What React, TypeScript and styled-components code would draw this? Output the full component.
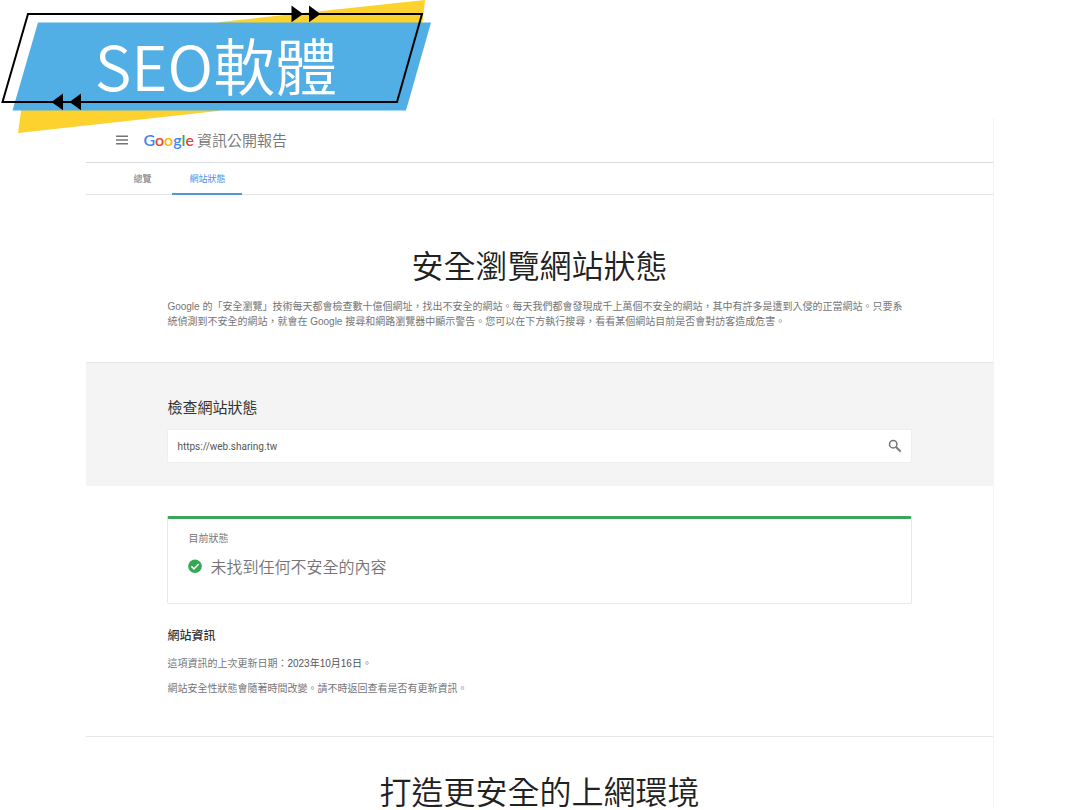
import React from "react";
import styled, { createGlobalStyle } from "styled-components";

const GlobalStyle = createGlobalStyle`
  *, *::before, *::after { box-sizing: border-box; }
  body {
    margin: 0;
    background: #fff;
    color: #757575;
    font-family: "Liberation Sans", "Noto Sans CJK TC", sans-serif;
    font-size: 10px;
    line-height: 15px;
  }
  h1, h2, h3, p { margin: 0; }
`;

const Page = styled.div`
  position: relative;
  padding: 118px 8% 0;
`;

const Banner = styled.div`
  position: absolute;
  top: 0;
  left: 0;
  width: 432px;
  height: 134px;
  display: flex;
  justify-content: center;
`;

const BannerArt = styled.svg`
  position: absolute;
  inset: 0;
`;

const BannerText = styled.span`
  position: relative;
  color: #fff;
  font-family: "Noto Sans CJK TC", sans-serif;
  font-size: 62px;
  font-weight: 350;
  line-height: 128px;
`;

const Report = styled.div`
  border-right: 1px solid #f4f4f4;
`;

const Header = styled.header`
  display: flex;
  align-items: center;
  height: 45px;
  padding-left: 29px;
  border-bottom: 1px solid #dadcde;
`;

const IconButton = styled.button`
  display: flex;
  padding: 0;
  border: 0;
  background: none;
  color: #757575;
  cursor: pointer;
`;

const Brand = styled.a`
  display: flex;
  align-items: center;
  gap: 3px;
  margin-left: 14px;
  color: #757575;
  font-family: "Noto Sans CJK TC", sans-serif;
  font-size: 15px;
  font-weight: 350;
  line-height: 20px;
  text-decoration: none;
`;

const Wordmark = styled.span`
  font-family: Lato, sans-serif;
  font-size: 16px;
  font-weight: 600;
`;

const Letter = styled.span<{ $color: string }>`
  color: ${(p) => p.$color};
`;

const Tabs = styled.nav`
  display: flex;
  gap: 4px;
  height: 32px;
  padding-left: 30px;
  border-bottom: 1px solid #e2e4e6;
`;

const Tab = styled.a<{ $active?: boolean }>`
  height: 32px;
  padding: 0 17px;
  border-bottom: 2px solid ${(p) => (p.$active ? "#5296d8" : "transparent")};
  color: ${(p) => (p.$active ? "#4a90e8" : "#757575")};
  font-size: 9px;
  line-height: 32px;
  text-decoration: none;
`;

const Section = styled.section<{ $top: number; $bottom: number; $shaded?: boolean }>`
  padding: ${(p) => p.$top}px 81px ${(p) => p.$bottom}px;
  background: ${(p) => (p.$shaded ? "#f4f4f4" : "#fff")};
  border-bottom: 1px solid ${(p) => (p.$shaded ? "#f4f4f4" : "#e6e6e6")};
`;

const Title = styled.h1`
  color: #212121;
  font-family: "Noto Sans CJK TC", sans-serif;
  font-size: 32px;
  font-weight: 350;
  line-height: 36px;
  text-align: center;
`;

const Intro = styled.p`
  margin-top: 17px;
`;

const FieldLabel = styled.label`
  display: block;
  color: #333;
  font-size: 15px;
  line-height: 20px;
`;

const SearchBox = styled.form`
  display: flex;
  align-items: center;
  height: 34px;
  margin-top: 11px;
  padding: 0 9px;
  border: 1px solid #eee;
  border-radius: 2px;
  background: #fff;
`;

const UrlInput = styled.input`
  flex: 1;
  min-width: 0;
  padding: 0;
  border: 0;
  outline: 0;
  background: none;
  color: #555;
  font-family: Roboto, sans-serif;
  font-size: 10px;
`;

const StatusCard = styled.div`
  height: 88px;
  padding: 12px 20px;
  border: 1px solid #e8e8e8;
  border-top: 3px solid #3ba55c;
  border-radius: 2px;
`;

const StatusLine = styled.p`
  display: flex;
  align-items: center;
  gap: 8px;
  margin-top: 8px;
  font-family: "Noto Sans CJK TC", sans-serif;
  font-size: 16px;
  font-weight: 350;
  line-height: 24px;
`;

const InfoTitle = styled.h3`
  margin: 22px 0 10px;
  color: #333;
  font-size: 12px;
  font-weight: 500;
  line-height: 20px;
`;

const InfoText = styled.p`
  margin-bottom: 10px;
`;

const InfoDate = styled.span`
  color: #555;
`;

const Outro = styled.section`
  padding-top: 35px;
`;

const LOGO: [string, string][] = [
  ["G", "#4285f4"],
  ["o", "#ea4335"],
  ["o", "#fbbc05"],
  ["g", "#4285f4"],
  ["l", "#34a853"],
  ["e", "#ea4335"],
];

export default function App() {
  return (
    <>
      <GlobalStyle />
      <Page>
        <Report>
          <Header>
            <IconButton type="button" aria-label="選單">
              <svg width="14" height="14" viewBox="0 0 14 14" fill="currentColor">
                <path d="M1 2.500h12v1.500H1zM1 6.200h12v1.500H1zM1 10h12v1.500H1z" />
              </svg>
            </IconButton>
            <Brand href="#">
              <Wordmark>
                {LOGO.map(([ch, color], i) => (
                  <Letter key={i} $color={color}>{ch}</Letter>
                ))}
              </Wordmark>
              <span>資訊公開報告</span>
            </Brand>
          </Header>
          <Tabs>
            <Tab href="#overview">總覽</Tab>
            <Tab href="#status" $active>網站狀態</Tab>
          </Tabs>
          <main>
            <Section $top={51} $bottom={33}>
              <Title>安全瀏覽網站狀態</Title>
              <Intro>
                Google 的「安全瀏覽」技術每天都會檢查數十億個網址，找出不安全的網站。每天我們都會發現成千上萬個不安全的網站，其中有許多是遭到入侵的正當網站。只要系統偵測到不安全的網站，就會在 Google 搜尋和網路瀏覽器中顯示警告。您可以在下方執行搜尋，看看某個網站目前是否會對訪客造成危害。
              </Intro>
            </Section>
            <Section $top={35} $bottom={22} $shaded>
              <FieldLabel htmlFor="site-url">檢查網站狀態</FieldLabel>
              <SearchBox onSubmit={(e) => e.preventDefault()}>
                <UrlInput id="site-url" type="text" defaultValue="https://web.sharing.tw" />
                <IconButton type="submit" aria-label="搜尋">
                  <svg width="14" height="14" viewBox="0 0 14 14" fill="none" stroke="currentColor">
                    <circle cx="5.200" cy="5.200" r="3.700" strokeWidth="1.500" />
                    <path d="M8 8L12.700 12.700" strokeWidth="1.900" />
                  </svg>
                </IconButton>
              </SearchBox>
            </Section>
            <Section $top={30} $bottom={30}>
              <StatusCard>
                <p>目前狀態</p>
                <StatusLine>
                  <svg width="14" height="14" viewBox="0 0 14 14">
                    <circle cx="7" cy="7.200" r="6.800" fill="#34a853" />
                    <path d="M3.400 7.400L6 9.900L10.700 5.100" fill="none" stroke="#fff" strokeWidth="1.500" />
                  </svg>
                  未找到任何不安全的內容
                </StatusLine>
              </StatusCard>
              <InfoTitle>網站資訊</InfoTitle>
              <InfoText>
                這項資訊的上次更新日期：<InfoDate>2023年10月16日</InfoDate>。
              </InfoText>
              <InfoText>網站安全性狀態會隨著時間改變。請不時返回查看是否有更新資訊。</InfoText>
            </Section>
            <Outro>
              <Title as="h2">打造更安全的上網環境</Title>
            </Outro>
          </main>
        </Report>
        <Banner>
          <BannerArt width="432" height="134" viewBox="0 0 432 134" aria-hidden="true">
            <path d="M425 0L421 36L218 111L18 133L24 90L220 22Z" fill="#fdd22f" />
            <path d="M38 22.500H431L406 110.500H12.500Z" fill="#52afe5" />
            <path d="M28 14H422L397 102H2.500Z" fill="none" stroke="#000" strokeWidth="2" />
            <path d="M291.500 5.500L303 14L291.500 22.200ZM309 5.500L320.500 14L309 22.200ZM63 93.500L51.500 102L63 110.300ZM81 93.500L69.500 102L81 110.300Z" />
          </BannerArt>
          <BannerText>SEO軟體</BannerText>
        </Banner>
      </Page>
    </>
  );
}
